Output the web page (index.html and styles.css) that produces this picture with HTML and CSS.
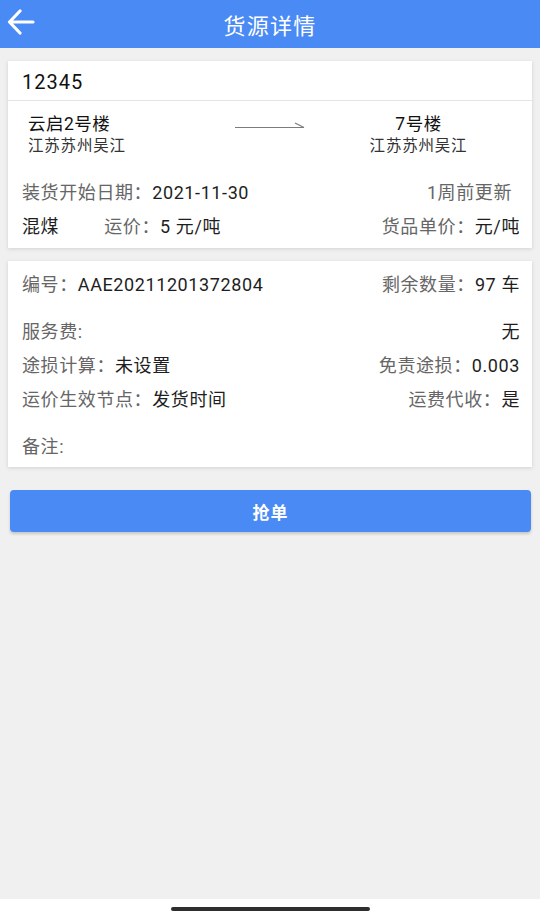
FILE: index.html
```html
<!DOCTYPE html>
<html lang="zh-CN">
<head>
<meta charset="utf-8">
<title>货源详情</title>
<link rel="stylesheet" href="styles.css">
</head>
<body>
<div class="page">
  <header class="topbar">
    <svg class="back" width="28" height="28" viewBox="0 0 28 28" aria-hidden="true">
      <path d="M26 13H3M13 2L2.5 13L13 24" fill="none" stroke="#fff" stroke-width="3.2" stroke-linecap="round" stroke-linejoin="round"/>
    </svg>
    <h1 class="title">货源详情</h1>
  </header>

  <main class="content">
    <section class="card">
      <div class="card-head">12345</div>
      <div class="route">
        <div class="place place-from">
          <div class="place-name">云启2号楼</div>
          <div class="place-area">江苏苏州吴江</div>
        </div>
        <svg class="route-arrow" width="70" height="10" viewBox="0 0 70 10" aria-hidden="true">
          <path d="M0 6.5H69M60 2L69 6.5" fill="none" stroke="#7c7c7c" stroke-width="1.2"/>
        </svg>
        <div class="place place-to">
          <div class="place-name">7号楼</div>
          <div class="place-area">江苏苏州吴江</div>
        </div>
      </div>
      <div class="rows">
        <div class="row row-gap-top">
          <span><span class="label">装货开始日期：</span><span class="value">2021-11-30</span></span>
          <span class="label updated">1周前更新</span>
        </div>
        <div class="row">
          <span class="group">
            <span class="value kind">混煤</span>
            <span><span class="label">运价：</span><span class="value">5 元/吨</span></span>
          </span>
          <span><span class="label">货品单价：</span><span class="value">元/吨</span></span>
        </div>
      </div>
    </section>

    <section class="card card-detail">
      <div class="row">
        <span><span class="label">编号：</span><span class="value">AAE20211201372804</span></span>
        <span><span class="label">剩余数量：</span><span class="value">97 车</span></span>
      </div>
      <div class="row row-spaced">
        <span class="label">服务费:</span>
        <span class="value">无</span>
      </div>
      <div class="row">
        <span><span class="label">途损计算：</span><span class="value">未设置</span></span>
        <span><span class="label">免责途损：</span><span class="value">0.003</span></span>
      </div>
      <div class="row">
        <span><span class="label">运价生效节点：</span><span class="value">发货时间</span></span>
        <span><span class="label">运费代收：</span><span class="value">是</span></span>
      </div>
      <div class="row row-spaced">
        <span class="label">备注:</span>
      </div>
    </section>

    <button class="grab" type="button">抢单</button>
  </main>

  <footer class="home-bar"><span class="home-indicator"></span></footer>
</div>
</body>
</html>
```

FILE: styles.css
```css
* { box-sizing: border-box; }

html, body {
  margin: 0;
  padding: 0;
  height: 100%;
}

body {
  font-family: Roboto, "Noto Sans CJK SC", sans-serif;
  background: #f0f0f0;
  color: #222;
}

.page {
  display: flex;
  flex-direction: column;
  height: 919px;
}

.topbar {
  height: 48px;
  background: #4a8af5;
  display: flex;
  align-items: center;
  justify-content: center;
  position: relative;
  flex-shrink: 0;
}

.back {
  position: absolute;
  left: 7px;
  top: 9px;
}

.title {
  margin: 0;
  color: #fff;
  font-size: 22px;
  font-weight: 400;
  letter-spacing: 1.2px;
}

.content {
  flex: 1;
  padding: 13px 8px 0;
  display: flex;
  flex-direction: column;
}

.card {
  background: #fff;
  box-shadow: 0 1px 4px rgba(0, 0, 0, 0.13);
}

.card-head {
  height: 40px;
  padding: 3px 14px 0;
  line-height: 36px;
  font-size: 20px;
  letter-spacing: 1px;
  color: #111;
  border-bottom: 1px solid #e4e4e4;
}

.route {
  display: grid;
  grid-template-columns: 1fr 70px 1fr;
  align-items: start;
  padding-top: 12px;
}

.place-from {
  padding-left: 20px;
}

.place-to {
  text-align: center;
}

.place-name {
  font-size: 17.5px;
  line-height: 22px;
  color: #111;
  letter-spacing: 0.5px;
}

.place-area {
  font-size: 15.5px;
  line-height: 22px;
  color: #333;
  letter-spacing: 0.8px;
}

.route-arrow {
  margin-top: 8px;
}

.rows {
  padding-bottom: 6px;
}

.row {
  display: flex;
  justify-content: space-between;
  align-items: center;
  height: 34px;
  padding: 0 12px 0 14px;
  font-size: 18px;
  letter-spacing: 0.6px;
  white-space: nowrap;
}

.row-gap-top {
  margin-top: 17px;
}

.label {
  color: #666;
}

.value {
  color: #1e1e1e;
}

.updated {
  padding-right: 8px;
}

.group {
  display: flex;
  gap: 45px;
}

.card-detail {
  margin-top: 13px;
  padding: 5px 0;
}

.row-spaced {
  margin-top: 13px;
}

.grab {
  margin: 23px 1px 0 2px;
  height: 42px;
  border: none;
  border-radius: 4px;
  background: #4a8af5;
  color: #fff;
  font-family: Roboto, "Noto Sans CJK SC", sans-serif;
  font-size: 17px;
  font-weight: 700;
  letter-spacing: 1px;
  box-shadow: 0 2px 3px rgba(0, 0, 0, 0.18);
}

.home-bar {
  height: 20px;
  background: #fff;
  flex-shrink: 0;
  display: flex;
  justify-content: center;
  padding-top: 8px;
}

.home-indicator {
  display: block;
  width: 199px;
  height: 4px;
  border-radius: 2px;
  background: #2e2e2e;
}
```
